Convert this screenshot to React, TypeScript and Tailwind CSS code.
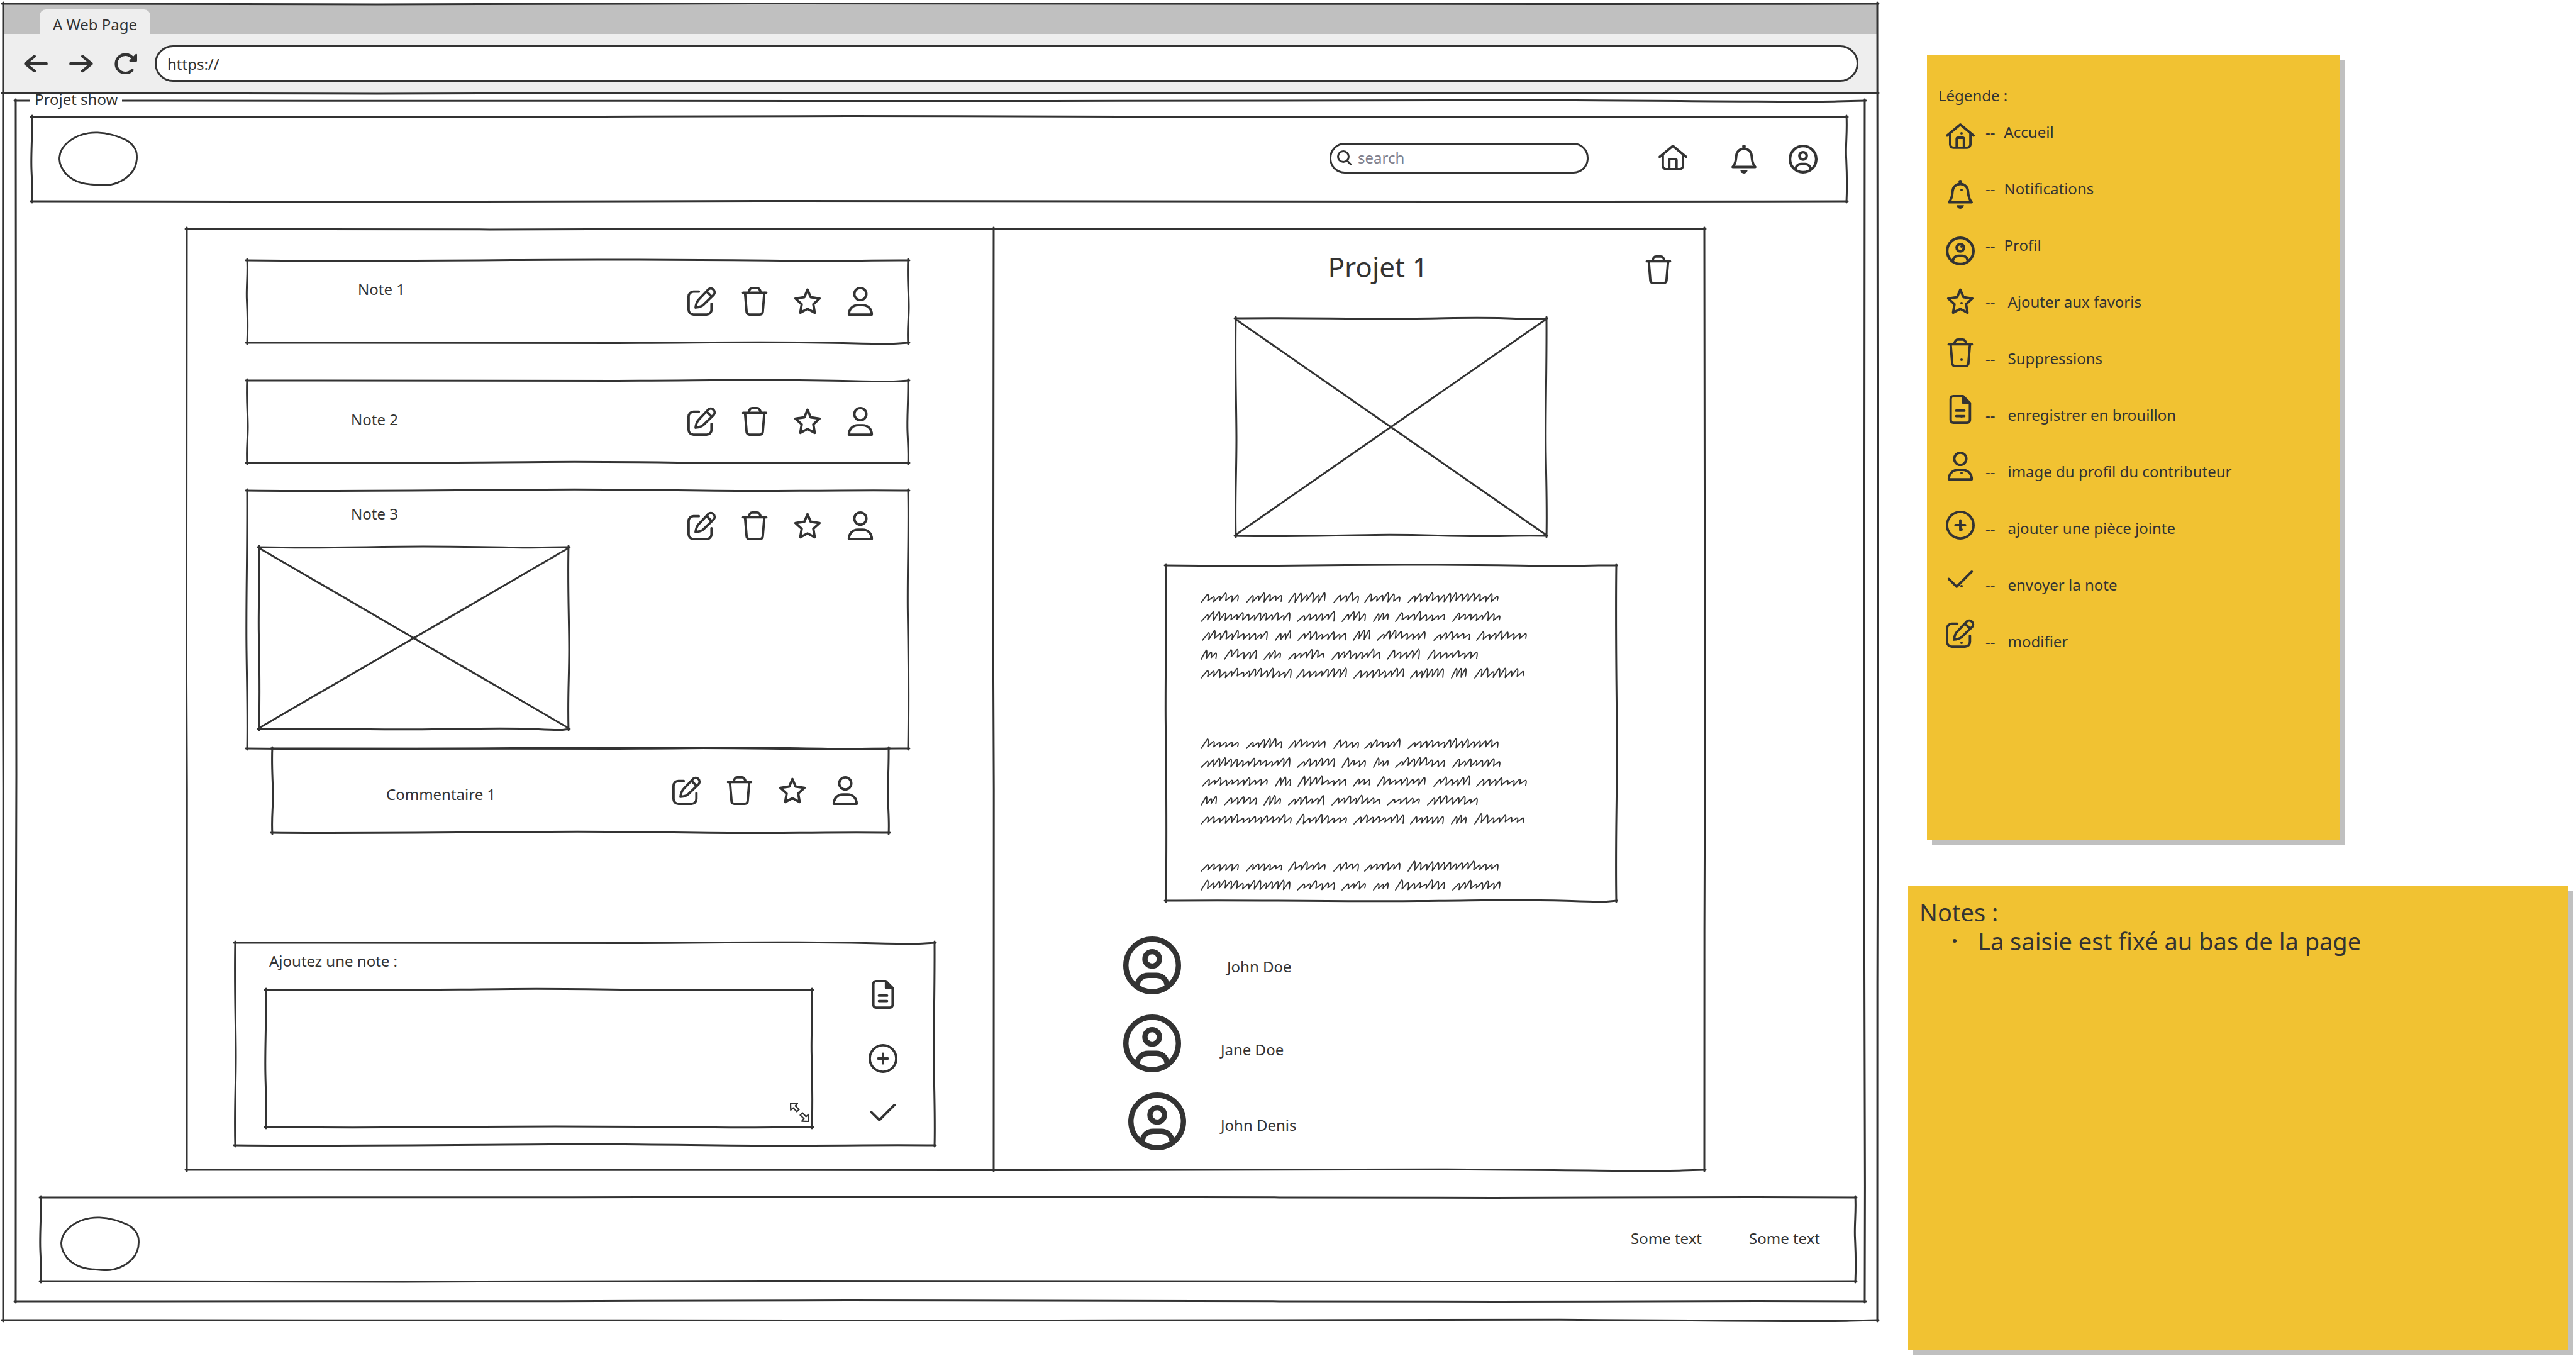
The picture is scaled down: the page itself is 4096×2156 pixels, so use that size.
import type { ReactNode } from "react";

const TOP_WAVES = [
  "M0 4C160 5.5 240 5 400 3.5S700 3.5 820 4.5 940 3.5 1000 4",
  "M0 4C200 2.5 380 5.5 560 4.5S800 2 900 4.5 970 5 1000 4",
  "M0 4C120 5.5 300 3.5 450 2.5S680 5 800 4.5 930 3 1000 4",
];

const SIDE_WAVES = [
  "M4 0C5.5 180 2.5 320 3.5 480S5.5 760 4 1000",
  "M4 0C2.5 220 5 400 5 560S2.5 820 4 1000",
  "M4 0C4.5 260 2 440 3 620S5 880 4 1000",
];

function HLine({ wave = 0, className }: { wave?: number; className: string }) {
  return (
    <svg
      aria-hidden="true"
      viewBox="0 0 1000 8"
      preserveAspectRatio="none"
      className={`pointer-events-none absolute -left-[2px] h-2 w-[calc(100%+4px)] overflow-visible ${className}`}
    >
      <path d={TOP_WAVES[wave % 3]} fill="none" stroke="#333333" strokeWidth="3" strokeLinecap="round" vectorEffect="non-scaling-stroke" />
    </svg>
  );
}

function VLine({ wave = 0, className }: { wave?: number; className: string }) {
  return (
    <svg
      aria-hidden="true"
      viewBox="0 0 8 1000"
      preserveAspectRatio="none"
      className={`pointer-events-none absolute -top-[2px] h-[calc(100%+4px)] w-2 overflow-visible ${className}`}
    >
      <path d={SIDE_WAVES[wave % 3]} fill="none" stroke="#333333" strokeWidth="3" strokeLinecap="round" vectorEffect="non-scaling-stroke" />
    </svg>
  );
}

/* Hand-drawn outline laid over the edges of its positioned parent. */
function Outline({ wave = 0 }: { wave?: number }) {
  return (
    <>
      <HLine wave={wave} className="-top-1" />
      <HLine wave={wave + 1} className="-bottom-1" />
      <VLine wave={wave} className="-left-1" />
      <VLine wave={wave + 1} className="-right-1" />
    </>
  );
}

type IconProps = { className?: string };

function Icon({ children, className = "size-[46px]" }: { children: ReactNode; className?: string }) {
  return (
    <svg
      aria-hidden="true"
      viewBox="0 0 24 24"
      className={`shrink-0 overflow-visible ${className}`}
      fill="none"
      stroke="currentColor"
      strokeWidth="2"
      strokeLinecap="round"
      strokeLinejoin="round"
    >
      {children}
    </svg>
  );
}

const EditIcon = ({ className }: IconProps) => (
  <Icon className={className}>
    <path d="M9.5 4H5a4 4 0 0 0-4 4v11a4 4 0 0 0 4 4h11a4 4 0 0 0 4-4v-5" />
    <path d="M6.8 17.2c.3-2.6 1-4.8 2.4-6.4l8.1-8.6a3.2 3.2 0 0 1 4.6 4.4L13 15.2c-1.6 1.4-3.6 1.7-6.2 2z" />
    <path d="M16.5 4.5l3 3" />
  </Icon>
);

const TrashIcon = ({ className }: IconProps) => (
  <Icon className={className}>
    <path d="M2.4 4.9h19.2" />
    <path d="M7 4.7C7.5 2.3 8.5 1 10 1h4c1.5 0 2.5 1.3 3 3.7" />
    <path d="M4 5l1.3 15.8a2.3 2.3 0 0 0 2.3 2.2h8.8a2.3 2.3 0 0 0 2.3-2.2L20 5" />
  </Icon>
);

const StarIcon = ({ className }: IconProps) => (
  <Icon className={className}>
    <path d="M12 2.4l2.6 6.2 7.4 1.1-5.2 4.7 1.2 7.1-6-3.2-6 3.2 1.2-7.1L2 9.7l7.4-1.1z" />
  </Icon>
);

const PersonIcon = ({ className }: IconProps) => (
  <Icon className={className}>
    <circle cx="12" cy="6" r="5" />
    <path d="M2.5 23c0-4.4 3.2-7.8 7.5-7.8h4c4.3 0 7.5 3.4 7.5 7.8z" />
  </Icon>
);

const HomeIcon = ({ className }: IconProps) => (
  <Icon className={className}>
    <path d="M1 10.2L12 1l11 9.2" />
    <path d="M3.6 8.5v9a2.8 2.8 0 0 0 2.8 2.8h11.2a2.8 2.8 0 0 0 2.8-2.8v-9" />
    <path d="M9 20v-7a1 1 0 0 1 1-1h4a1 1 0 0 1 1 1v7" />
  </Icon>
);

const BellIcon = ({ className }: IconProps) => (
  <Icon className={className}>
    <path d="M2.6 18.5c2.2-2.3 2.8-4.8 3-9C5.8 6 8.2 3.4 12 3.4s6.2 2.6 6.4 6.1c.2 4.2.8 6.7 3 9z" />
    <circle cx="12" cy="1.5" r="1.5" fill="currentColor" stroke="none" />
    <path d="M9 21h6a3 3 0 0 1-6 0z" fill="currentColor" stroke="none" />
  </Icon>
);

const ProfileIcon = ({ className }: IconProps) => (
  <Icon className={className}>
    <g strokeWidth="2.2">
      <circle cx="12" cy="12" r="10.9" />
      <circle cx="12" cy="9.3" r="3" />
      <path d="M5.9 19.8c.3-2.2 2.2-3.7 4.4-3.7h3.4c2.2 0 4.1 1.5 4.4 3.7" />
    </g>
  </Icon>
);

const FileIcon = ({ className }: IconProps) => (
  <Icon className={className}>
    <path d="M6.2 1h8.1L20 6.7v14.1a2.2 2.2 0 0 1-2.2 2.2H6.2A2.2 2.2 0 0 1 4 20.8V3.2A2.2 2.2 0 0 1 6.2 1z" />
    <path d="M13.5 1v5.5a1 1 0 0 0 1 1H20.5L14.5 1z" fill="currentColor" stroke="none" />
    <path d="M8.6 13h6.8M8.6 17.5h6.8" />
  </Icon>
);

const PlusIcon = ({ className }: IconProps) => (
  <Icon className={className}>
    <circle cx="12" cy="12" r="11" />
    <path d="M8 12h8M12 8v8" />
  </Icon>
);

const CheckIcon = ({ className }: IconProps) => (
  <Icon className={className}>
    <path d="M2.4 11.7L9 18.2 21.5 5.7" />
  </Icon>
);

const ArrowIcon = ({ className = "" }: IconProps) => (
  <svg aria-hidden="true" viewBox="0 0 120 90" className={`w-[38px] ${className}`} fill="none" stroke="currentColor" strokeWidth="14" strokeLinecap="round" strokeLinejoin="round">
    <path d="M8 45h105M53 8L8 45l45 37" />
  </svg>
);

const ReloadIcon = () => (
  <svg aria-hidden="true" viewBox="0 0 110 105" className="w-[36px]" fill="none" stroke="currentColor" strokeWidth="14" strokeLinecap="round" strokeLinejoin="round">
    <path d="M86 84A45 45 0 1 1 88 25" />
    <path d="M106 9v30H76z" fill="currentColor" strokeWidth="8" />
  </svg>
);

const SearchIcon = () => (
  <svg aria-hidden="true" viewBox="0 0 24 24" className="size-6 shrink-0" fill="none" stroke="currentColor" strokeWidth="3" strokeLinecap="round">
    <circle cx="10" cy="10" r="8.5" />
    <path d="M16.5 17l6 6" />
  </svg>
);

const ResizeIcon = () => (
  <svg aria-hidden="true" viewBox="0 0 96 96" className="pointer-events-none absolute right-[4px] bottom-[8px] size-[31px]" fill="none" stroke="currentColor" strokeWidth="7" strokeLinejoin="round">
    <path d="M3 3L37 4L27 17L45 34L34 45L17 27L4 37z" />
    <path d="M93 93L59 92L69 79L51 62L62 51L79 69L92 59z" />
  </svg>
);

const Logo = () => (
  <svg role="img" aria-label="Logo" viewBox="0 0 398 276" className="w-[126px] shrink-0" fill="none" stroke="currentColor" strokeWidth="9">
    <path d="M197 6C240 8 295 22 338 42C374 62 393 92 393 120C396 165 382 192 360 215C325 252 275 270 232 270C205 270 178 267 155 265C105 260 62 240 35 210C12 182 3 155 5 130C7 98 25 72 52 50C92 20 145 4 197 6Z" />
  </svg>
);

function Picture({ className, wave }: { className: string; wave: number }) {
  return (
    <div role="img" aria-label="Image" className={`relative ${className}`}>
      <svg aria-hidden="true" viewBox="0 0 100 100" preserveAspectRatio="none" className="absolute inset-0 size-full">
        <path d="M0 0.5L100 99.5M100 0.5L0 99.5" fill="none" stroke="#333333" strokeWidth="3" vectorEffect="non-scaling-stroke" />
      </svg>
      <Outline wave={wave} />
    </div>
  );
}

const ACTIONS = [
  { label: "modifier", Glyph: EditIcon },
  { label: "supprimer", Glyph: TrashIcon },
  { label: "ajouter aux favoris", Glyph: StarIcon },
  { label: "contributeur", Glyph: PersonIcon },
];

function Actions() {
  return (
    <div className="flex gap-[38px]">
      {ACTIONS.map(({ label, Glyph }) => (
        <button key={label} type="button" aria-label={label}>
          <Glyph />
        </button>
      ))}
    </div>
  );
}

/* Scribbled filler text: each pair is the start and the width of one word. */
const LINES: [number, number][][] = [
  [[0, 60], [72, 57], [139, 59], [211, 40], [260, 57], [329, 144]],
  [[0, 142], [153, 60], [224, 38], [274, 24], [309, 79], [400, 76]],
  [[2, 104], [118, 25], [154, 77], [242, 27], [280, 77], [370, 58], [438, 80]],
  [[0, 25], [37, 52], [100, 27], [139, 57], [208, 77], [296, 52], [360, 80]],
  [[0, 144], [152, 80], [243, 80], [333, 53], [398, 24], [435, 79]],
];

function scribble(words: [number, number][], seed: number) {
  let s = seed * 7919 + 13;
  const next = () => {
    s = (s * 1103515245 + 12345) % 2147483648;
    return s / 2147483648;
  };
  return words
    .map(([start, width]) => {
      const count = Math.max(2, Math.round(width / 9.5));
      const step = width / (count + 0.3);
      let d = `M${start} 16`;
      for (let i = 0; i < count; i++) {
        const x = start + i * step;
        const top = next() > 0.6 ? next() * 3 : 4 + next() * 3;
        const bottom = 12.5 + next() * 3;
        d += `L${(x + step * 1.05).toFixed(1)} ${top.toFixed(1)}Q${(x + step * 1.3).toFixed(1)} ${top.toFixed(1)} ${(x + step * 1.08).toFixed(1)} ${bottom.toFixed(1)}`;
      }
      return d;
    })
    .join("");
}

function Scribble({ lines, seed }: { lines: number; seed: number }) {
  return (
    <div className="flex flex-col gap-[14px]">
      {LINES.slice(0, lines).map((words, i) => (
        <svg key={i} aria-hidden="true" viewBox="0 0 520 16" className="h-4 w-[520px] overflow-visible" fill="none" stroke="currentColor" strokeWidth="1.8" strokeLinecap="round" strokeLinejoin="round">
          <path d={scribble(words, seed + i)} />
        </svg>
      ))}
    </div>
  );
}

const NOTES = [
  { title: "Note 1", box: "mt-[50px] min-h-[131px]", text: "pt-[30px] pl-[176px]", actions: "pt-[42px]" },
  { title: "Note 2", box: "mt-[60px] min-h-[131px]", text: "pt-[46px] pl-[165px]", actions: "pt-[42px]" },
  { title: "Note 3", box: "mt-[44px]", text: "pt-[21px] pl-[165px]", actions: "pt-[33px]", picture: true },
];

const PEOPLE = [
  { name: "John Doe", row: "", text: "pl-[73px] pt-1" },
  { name: "Jane Doe", row: "", text: "pl-[63px] pt-5" },
  { name: "John Denis", row: "pl-2", text: "pl-[55px] pt-3" },
];

const LEGEND = [
  { label: "Accueil", Glyph: HomeIcon, lift: "pt-[18px]", indent: "pl-[14px]" },
  { label: "Notifications", Glyph: BellIcon, lift: "pt-[18px]", indent: "pl-[14px]" },
  { label: "Profil", Glyph: ProfileIcon, lift: "pt-[18px]", indent: "pl-[14px]" },
  { label: "Ajouter aux favoris", Glyph: StarIcon, lift: "pt-2", indent: "pl-5" },
  { label: "Suppressions", Glyph: TrashIcon, lift: "pt-0", indent: "pl-5" },
  { label: "enregistrer en brouillon", Glyph: FileIcon, lift: "pt-0", indent: "pl-5" },
  { label: "image du profil du contributeur", Glyph: PersonIcon, lift: "pt-0", indent: "pl-5" },
  { label: "ajouter une pièce jointe", Glyph: PlusIcon, lift: "pt-1", indent: "pl-5" },
  { label: "envoyer la note", Glyph: CheckIcon, lift: "pt-0", indent: "pl-5" },
  { label: "modifier", Glyph: EditIcon, lift: "-mt-1", indent: "pl-5" },
];

function BrowserBar() {
  return (
    <>
      <div className="flex h-12 items-end bg-[#c0c0c0] pl-[58px]">
        <div className="flex h-[39px] w-[176px] items-center justify-center rounded-t-[10px] bg-[#eeeeee] pt-2">A Web Page</div>
      </div>
      <div className="relative flex h-[94px] items-center bg-[#eeeeee] pr-[30px] pl-[33px]">
        <div className="flex items-center gap-[34px]">
          <button type="button" aria-label="Précédent"><ArrowIcon /></button>
          <button type="button" aria-label="Suivant"><ArrowIcon className="rotate-180" /></button>
          <button type="button" aria-label="Recharger"><ReloadIcon /></button>
        </div>
        <input
          aria-label="Adresse"
          defaultValue="https://"
          className="ml-[28px] h-[58px] min-w-0 flex-1 rounded-full border-[3px] border-[#333333] bg-white px-[17px]"
        />
        <HLine wave={0} className="-bottom-1" />
      </div>
    </>
  );
}

function Header() {
  return (
    <header className="relative mt-[26px] mr-[29px] ml-[26px] flex h-[134px] items-center pr-[46px] pl-[42px]">
      <Logo />
      <label className="mb-1 ml-auto flex h-[49px] w-[412px] items-center gap-[9px] rounded-[24px] border-[3px] border-[#333333] px-[9px]">
        <SearchIcon />
        <input type="search" aria-label="Recherche" placeholder="search" className="min-w-0 flex-1 bg-transparent outline-none placeholder:text-[#80808c]" />
      </label>
      <nav className="ml-[111px] flex items-center">
        <a href="#accueil" aria-label="Accueil"><HomeIcon /></a>
        <a href="#notifications" aria-label="Notifications" className="ml-[67px]"><BellIcon /></a>
        <a href="#profil" aria-label="Profil" className="ml-[48px]"><ProfileIcon /></a>
      </nav>
      <Outline wave={2} />
    </header>
  );
}

function NotesColumn() {
  return (
    <div className="relative pb-[39px]">
      <div className="mr-[136px] ml-[96px]">
        {NOTES.map((note, i) => (
          <article key={note.title} className={`relative ${note.box}`}>
            <div className="flex items-start justify-between pr-[53px]">
              <h2 className={note.text}>{note.title}</h2>
              <div className={note.actions}><Actions /></div>
            </div>
            {note.picture && <Picture wave={0} className="mt-[11px] mb-[31px] ml-[19px] inline-block h-[289px] w-[46.8%] align-top" />}
            <Outline wave={i} />
          </article>
        ))}
        <article className="relative mr-[31px] ml-10 flex h-[134px] items-start justify-between pr-[46px] pl-[181px]">
          <h3 className="pt-[57px]">Commentaire 1</h3>
          <div className="pt-[44px]"><Actions /></div>
          <Outline wave={1} />
        </article>
      </div>
      <form className="relative mt-[175px] mr-[94px] ml-[77px] flex gap-[90px] pt-[13px] pr-[59px] pb-[29px] pl-[49px]">
        <div className="flex flex-1 flex-col">
          <label htmlFor="note" className="pl-[5px]">Ajoutez une note :</label>
          <div className="relative mt-[30px] h-[218px]">
            <textarea id="note" className="block size-full resize-none bg-transparent p-4 outline-none" />
            <ResizeIcon />
            <Outline wave={2} />
          </div>
        </div>
        <div className="flex flex-col items-center pt-[46px]">
          <button type="button" aria-label="enregistrer en brouillon"><FileIcon /></button>
          <button type="button" aria-label="ajouter une pièce jointe" className="mt-14"><PlusIcon /></button>
          <button type="submit" aria-label="envoyer la note" className="mt-10"><CheckIcon /></button>
        </div>
        <Outline wave={1} />
      </form>
      <VLine wave={0} className="-right-1" />
    </div>
  );
}

function ProjectColumn() {
  return (
    <div className="pl-[134px]">
      <div className="mt-8 flex items-start pr-[50px] pl-[54px]">
        <h1 className="flex-1 text-center text-[44px] leading-[56px]">Projet 1</h1>
        <button type="button" aria-label="supprimer" className="pt-[10px]"><TrashIcon /></button>
      </div>
      <Picture wave={1} className="mx-auto mt-[54px] h-[346px] w-[49.5%]" />
      <div className="relative mx-auto mt-[47px] flex h-[533px] w-[71.8%] flex-col pt-[43px] pl-[56px]">
        <Scribble lines={5} seed={1} />
        <div className="mt-24"><Scribble lines={5} seed={11} /></div>
        <div className="mt-[59px]"><Scribble lines={2} seed={23} /></div>
        <Outline wave={0} />
      </div>
      <ul className="mt-[57px] flex flex-col gap-8 pl-[72px]">
        {PEOPLE.map((person) => (
          <li key={person.name} className={`flex items-center ${person.row}`}>
            <ProfileIcon className="size-[92px]" />
            <span className={person.text}>{person.name}</span>
          </li>
        ))}
      </ul>
    </div>
  );
}

function Footer() {
  return (
    <footer className="relative mt-11 mr-[15px] mb-8 ml-10 flex h-[133px] items-center pr-[56px] pl-[31px]">
      <div className="self-end pb-4"><Logo /></div>
      <nav className="mb-1 ml-auto flex gap-[75px]">
        <a href="#texte-1">Some text</a>
        <a href="#texte-2">Some text</a>
      </nav>
      <Outline wave={2} />
    </footer>
  );
}

function Legend() {
  return (
    <section className="ml-[30px] min-h-[1248px] w-[62.5%] bg-[#f1c232] pt-[49px] pl-[18px] shadow-[8px_8px_0_#c0c0c0]">
      <h2>Légende :</h2>
      <ul className="mt-[10px]">
        {LEGEND.map(({ label, Glyph, lift, indent }) => (
          <li key={label} className="flex h-[90px] items-start">
            <span className="relative w-[75px] pl-3">
              <span className={`block ${lift}`}><Glyph /></span>
              <span className="absolute top-[32px] left-[35px] size-1 rounded-full bg-[#333333]" />
            </span>
            <span className="pt-4">--</span>
            <span className={`pt-4 ${indent}`}>{label}</span>
          </li>
        ))}
      </ul>
    </section>
  );
}

function Remarks() {
  return (
    <section className="mt-[74px] flex-1 bg-[#f1c232] pt-[18px] pl-[18px] text-[38px] leading-[46px] shadow-[8px_8px_0_#c0c0c0]">
      <h2>Notes :</h2>
      <ul>
        <li className="flex items-center">
          <span className="mr-[34px] ml-[53px] size-[6px] rounded-full bg-[#333333]" />
          La saisie est fixé au bas de la page
        </li>
      </ul>
    </section>
  );
}

export default function App() {
  return (
    <div className="grid min-h-screen grid-cols-[2980fr_1050fr] gap-x-[49px] bg-white pr-3 pl-[5px] font-['Noto_Sans',sans-serif] text-[24px] leading-8 text-[#333333]">
      <main className="relative mt-[6px] self-start">
        <BrowserBar />
        <section className="relative mx-5 mt-3 mb-[30px] flow-root">
          <Outline wave={1} />
          <div className="absolute -top-[10px] left-[23px] bg-white px-[7px] leading-4">Projet show</div>
          <Header />
          <div className="relative mt-11 mr-[255px] ml-[272px] grid grid-cols-[1283fr_1130fr]">
            <NotesColumn />
            <ProjectColumn />
            <Outline wave={0} />
          </div>
          <Footer />
        </section>
        <Outline wave={0} />
      </main>
      <aside className="flex flex-col pt-[87px] pb-[10px]">
        <Legend />
        <Remarks />
      </aside>
    </div>
  );
}
